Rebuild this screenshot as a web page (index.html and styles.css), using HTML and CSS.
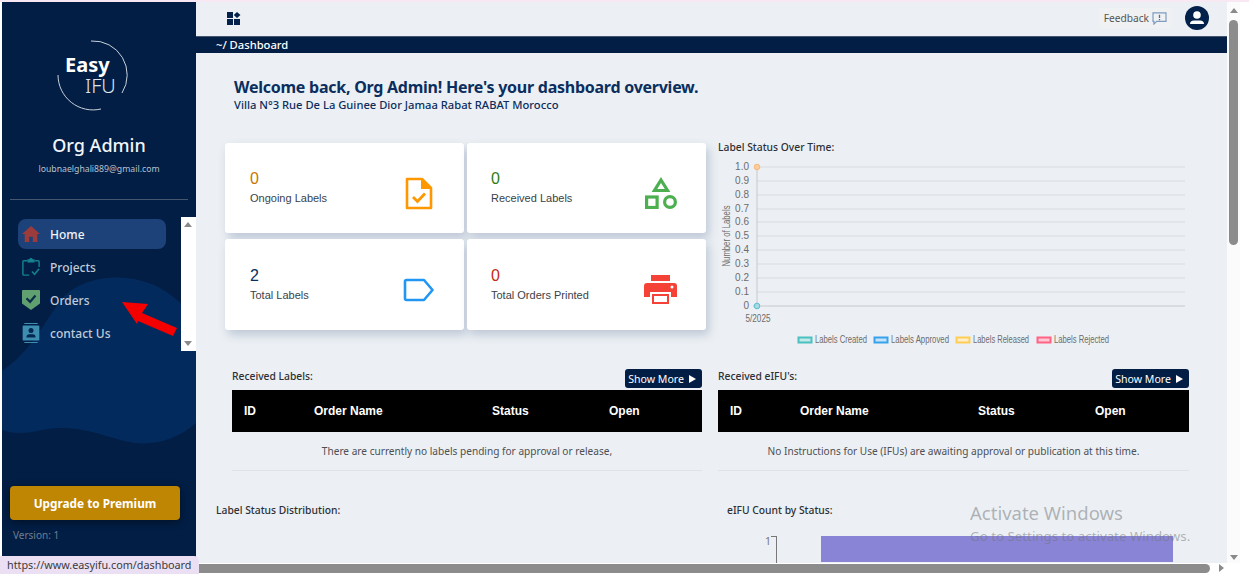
FILE: index.html
```html
<!DOCTYPE html>
<html lang="en">
<head>
    <meta charset="UTF-8">
    <title>EasyIFU Dashboard</title>
    <link rel="stylesheet" href="styles.css">
</head>
<body>
    <div class="top-line"></div>
    <div class="app">
        <aside class="sidebar">
            <svg class="wave" viewBox="0 0 194 200" aria-hidden="true">
                <path d="M0 97 C28 78 40 52 58 27 C76 4 116 -3 150 10 C168 18 184 32 194 48 L194 149 C172 168 146 174 118 166 C92 158 68 150 40 156 C24 160 10 160 0 156 Z"/>
            </svg>
            <div class="logo">
                <svg class="logo-ring" viewBox="0 0 72 72" aria-hidden="true">
                    <path d="M34 1 A34 34 0 0 1 65 53"/>
                    <path d="M1 35 A35 35 0 0 0 44 69"/>
                </svg>
                <span class="logo-easy">Easy</span>
                <span class="logo-ifu">IFU</span>
            </div>
            <div class="user-name">Org Admin</div>
            <div class="user-email">loubnaelghali889@gmail.com</div>
            <div class="side-rule"></div>
            <div class="nav-wrap">
                <nav class="nav">
                    <a class="nav-item active">
                        <svg class="nav-icon" viewBox="0 0 20 18"><path fill="#9c3b3b" d="M10 0 L20 9 L17 9 L17 18 L12 18 L12 12 L8 12 L8 18 L3 18 L3 9 L0 9 Z"/></svg>
                        Home
                    </a>
                    <a class="nav-item">
                        <svg class="nav-icon" viewBox="0 0 20 20"><path fill="none" stroke="#15808f" stroke-width="1.6" d="M6 3 H2 Q1 3 1 4 V18 Q1 19 2 19 H8 M14 3 H18 Q19 3 19 4 V10"/><path fill="#15808f" d="M6 1.5 H8 L9 0 H11 L12 1.5 H14 V5 H6 Z"/><path fill="none" stroke="#15808f" stroke-width="1.8" d="M11 15 L14 18 L19 12"/></svg>
                        Projects
                    </a>
                    <a class="nav-item">
                        <svg class="nav-icon" viewBox="0 0 20 22"><path fill="#5f9f70" d="M1 0 H19 Q20 0 20 1 V15 L10 22 L0 15 V1 Q0 0 1 0 Z"/><path fill="none" stroke="#0d2c4c" stroke-width="2.4" d="M5 9 L9 13 L15 6"/></svg>
                        Orders
                    </a>
                    <a class="nav-item">
                        <svg class="nav-icon" viewBox="0 0 20 24"><path fill="#3e8eb2" d="M2 0 H18 V1.2 H2 Z M2 22.8 H18 V24 H2 Z M1 3 H19 Q20 3 20 4 V20 Q20 21 19 21 H1 Q0 21 0 20 V4 Q0 3 1 3 Z"/><circle cx="10" cy="9" r="3" fill="#04284f"/><path fill="#04284f" d="M4.5 17.5 Q4.5 13.5 8 13.5 H12 Q15.5 13.5 15.5 17.5 Z"/></svg>
                        contact Us
                    </a>
                </nav>
                <div class="nav-scroll">
                    <span class="arrow-up"></span>
                    <span class="arrow-down"></span>
                </div>
            </div>
            <button class="upgrade">Upgrade to Premium</button>
            <div class="version">Version: 1</div>
            <svg class="red-arrow" viewBox="0 0 60 40" aria-hidden="true"><path fill="#f40000" d="M0 0 L26 2 L20 11 L55 26 L51 34 L16 19 L15 22 Z"/></svg>
        </aside>

        <main class="main">
            <header class="topbar">
                <svg class="apps-icon" viewBox="0 0 14 13"><path fill="#03214a" d="M0 0 H6 V6 H0 Z M0 7 H6 V13 H0 Z M7 7 H13 V13 H7 Z M10 0 L13.5 3 L10 6 L6.8 3 Z"/></svg>
                <div class="feedback">
                    Feedback
                    <svg class="feedback-icon" viewBox="0 0 16 14"><path fill="none" stroke="#7d9cc0" stroke-width="1.3" d="M1 1 H15 V10 H5 L2 13 V10 H1 Z"/><path stroke="#51718f" stroke-width="1.4" d="M8 3 V6.5 M8 7.6 V9"/></svg>
                </div>
                <svg class="avatar" viewBox="0 0 24 24"><circle cx="12" cy="12" r="12" fill="#03214a"/><circle cx="12" cy="9" r="3.8" fill="#fff"/><path fill="#fff" d="M5 18 Q5 14.5 9 14.5 H15 Q19 14.5 19 18 Z"/></svg>
            </header>
            <div class="crumb">~/ Dashboard</div>

            <div class="welcome">
                <h1>Welcome back, Org Admin! Here's your dashboard overview.</h1>
                <p>Villa N°3 Rue De La Guinee Dior Jamaa Rabat RABAT Morocco</p>
            </div>

            <section class="overview">
                <div class="cards">
                    <div class="card">
                        <div class="card-text"><div class="count orange">0</div><div class="card-label">Ongoing Labels</div></div>
                        <svg class="card-icon doc" viewBox="0 0 28 33"><path fill="none" stroke="#ff9800" stroke-width="2.6" stroke-linejoin="round" d="M2 2 H17 L26 11 V31 H2 Z"/><path fill="#ff9800" d="M16 1 L27 12 H16 Z"/><path fill="none" stroke="#ff9800" stroke-width="2.8" d="M8 20 L12.5 24.5 L20 16.5"/></svg>
                    </div>
                    <div class="card">
                        <div class="card-text"><div class="count green">0</div><div class="card-label">Received Labels</div></div>
                        <svg class="card-icon shapes" viewBox="0 0 32 32"><path fill="none" stroke="#4caf50" stroke-width="3.2" d="M16 3 L22.5 13.5 H9.5 Z"/><rect x="1.6" y="20" width="10.5" height="10.5" fill="none" stroke="#4caf50" stroke-width="3.2"/><circle cx="25" cy="25" r="5.4" fill="none" stroke="#4caf50" stroke-width="3.2"/></svg>
                    </div>
                    <div class="card">
                        <div class="card-text"><div class="count navy">2</div><div class="card-label">Total Labels</div></div>
                        <svg class="card-icon tag" viewBox="0 0 32 24"><path fill="none" stroke="#2196f3" stroke-width="2.6" stroke-linejoin="round" d="M3.5 2 H21 L29.5 12 L21 22 H3.5 Q2 22 2 20.5 V3.5 Q2 2 3.5 2 Z"/></svg>
                    </div>
                    <div class="card">
                        <div class="card-text"><div class="count red">0</div><div class="card-label">Total Orders Printed</div></div>
                        <svg class="card-icon printer" viewBox="0 0 33 30"><path fill="#f44336" d="M7 0 H26 V6 H7 Z M3 8 H30 Q33 8 33 11 V22 H27 V17 H6 V22 H0 V11 Q0 8 3 8 Z M8 19 H25 V29 H8 Z"/><path fill="#fff" d="M10 21 H23 V27 H10 Z"/><circle cx="28" cy="12" r="1.5" fill="#fff"/></svg>
                    </div>
                </div>
                <div class="line-chart">
                    <h3 class="chart-title">Label Status Over Time:</h3>
                    <svg class="chart-svg" viewBox="0 0 480 196">
                        <path class="grid" d="M39 11 H467 M39 25 H467 M39 39 H467 M39 53 H467 M39 66 H467 M39 80 H467 M39 94 H467 M39 108 H467 M39 122 H467 M39 136 H467"/>
                        <path class="axis" d="M39 11 V150 M35 150 H467"/>
                        <text class="tick" x="31" y="14">1.0</text>
                        <text class="tick" x="31" y="28">0.9</text>
                        <text class="tick" x="31" y="42">0.8</text>
                        <text class="tick" x="31" y="56">0.7</text>
                        <text class="tick" x="31" y="69">0.6</text>
                        <text class="tick" x="31" y="83">0.5</text>
                        <text class="tick" x="31" y="97">0.4</text>
                        <text class="tick" x="31" y="111">0.3</text>
                        <text class="tick" x="31" y="125">0.2</text>
                        <text class="tick" x="31" y="139">0.1</text>
                        <text class="tick" x="31" y="153">0</text>
                        <text class="tick-x" x="40" y="166" textLength="25" lengthAdjust="spacingAndGlyphs">5/2025</text>
                        <text class="axis-name" transform="translate(12 80) rotate(-90)" textLength="61" lengthAdjust="spacingAndGlyphs">Number of Labels</text>
                        <circle cx="39" cy="11" r="2.8" fill="#ffcd9a" stroke="#f7b77c"/>
                        <circle cx="39" cy="150" r="2.8" fill="#a5dce0" stroke="#5cbcd0"/>
                        <rect x="80.5" y="181.5" width="13" height="5" fill="#c3e8e8" stroke="#4bc0c0" stroke-width="2"/>
                        <text class="legend" x="97" y="187" textLength="52" lengthAdjust="spacingAndGlyphs">Labels Created</text>
                        <rect x="156.5" y="181.5" width="13" height="5" fill="#c5e3f8" stroke="#36a2eb" stroke-width="2"/>
                        <text class="legend" x="173" y="187" textLength="58" lengthAdjust="spacingAndGlyphs">Labels Approved</text>
                        <rect x="238.5" y="181.5" width="13" height="5" fill="#ffeec8" stroke="#ffcd56" stroke-width="2"/>
                        <text class="legend" x="255" y="187" textLength="56" lengthAdjust="spacingAndGlyphs">Labels Released</text>
                        <rect x="319.5" y="181.5" width="13" height="5" fill="#ffc8d4" stroke="#ff6384" stroke-width="2"/>
                        <text class="legend" x="336" y="187" textLength="55" lengthAdjust="spacingAndGlyphs">Labels Rejected</text>
                    </svg>
                </div>
            </section>

            <section class="tables">
                <div class="table-block">
                    <div class="table-head">
                        <span class="table-title">Received Labels:</span>
                        <button class="show-more">Show More <span class="play"></span></button>
                    </div>
                    <div class="table-row-head">
                        <span class="col-id">ID</span><span class="col-name">Order Name</span><span class="col-status">Status</span><span>Open</span>
                    </div>
                    <div class="empty">There are currently no labels pending for approval or release,</div>
                </div>
                <div class="table-block">
                    <div class="table-head">
                        <span class="table-title">Received eIFU's:</span>
                        <button class="show-more">Show More <span class="play"></span></button>
                    </div>
                    <div class="table-row-head">
                        <span class="col-id">ID</span><span class="col-name">Order Name</span><span class="col-status">Status</span><span>Open</span>
                    </div>
                    <div class="empty">No Instructions for Use (IFUs) are awaiting approval or publication at this time.</div>
                </div>
            </section>

            <section class="bottom">
                <h3 class="dist-title">Label Status Distribution:</h3>
                <div class="count-chart">
                    <h3 class="chart-title">eIFU Count by Status:</h3>
                    <div class="bars">
                        <span class="bar-tick">1</span>
                        <span class="bar-axis"></span>
                        <span class="bar"></span>
                    </div>
                </div>
            </section>

            <div class="activate">
                <div class="activate-big">Activate Windows</div>
                <div class="activate-small">Go to Settings to activate Windows.</div>
            </div>
        </main>

        <div class="v-scroll">
            <span class="arrow-up"></span>
            <span class="v-thumb"></span>
            <span class="arrow-down"></span>
        </div>
    </div>
    <div class="h-scroll">
        <span class="h-thumb"></span>
        <span class="arrow-right"></span>
    </div>
    <div class="status-url">https://www.easyifu.com/dashboard</div>
</body>
</html>
```

FILE: styles.css
```css
* {
    box-sizing: border-box;
}

html, body {
    margin: 0;
    height: 100%;
    overflow: hidden;
    background: #fff;
}

body {
    position: relative;
    font-family: "Noto Sans", "Liberation Sans", sans-serif;
    color: #333;
}

h1, h3, p {
    margin: 0;
}

.top-line {
    height: 2px;
    background: #f8e8f3;
}

.app {
    display: flex;
    width: 1240px;
    height: 561px;
    padding-left: 2px;
}

/* sidebar */
.sidebar {
    position: relative;
    flex: 0 0 194px;
    display: flex;
    flex-direction: column;
    background: #021e45;
    overflow: hidden;
}

.wave {
    position: absolute;
    top: 272px;
    left: 0;
    width: 194px;
    height: 200px;
    fill: #032a5c;
}

.logo {
    position: relative;
    width: 72px;
    height: 72px;
    margin: 38px 0 0 55px;
    color: #fff;
}

.logo-ring {
    position: absolute;
    top: 0;
    left: 0;
    width: 72px;
    height: 72px;
    fill: none;
    stroke: #c9d2dc;
    stroke-width: 1;
}

.logo-easy {
    position: absolute;
    top: 15px;
    left: 8px;
    font-size: 20px;
    line-height: 20px;
    font-weight: 700;
}

.logo-ifu {
    position: absolute;
    top: 36px;
    left: 28px;
    font-size: 20px;
    line-height: 20px;
    font-weight: 300;
    color: #dfe5ec;
}

.user-name {
    margin-top: 20px;
    text-align: center;
    font-size: 18px;
    line-height: 26px;
    font-weight: 500;
    color: #f2f5f8;
}

.user-email {
    margin-top: 4px;
    text-align: center;
    font-size: 8.7px;
    line-height: 14px;
    color: #b7c2d0;
}

.side-rule {
    height: 1px;
    margin: 23px 8px 0;
    background: #46566c;
}

.nav-wrap {
    position: relative;
    display: flex;
    justify-content: space-between;
    height: 134px;
    margin-top: 17px;
}

.nav {
    padding: 2px 0 0 16px;
}

.nav-item {
    display: flex;
    align-items: center;
    gap: 10px;
    width: 148px;
    height: 30px;
    margin-bottom: 3px;
    padding-left: 4px;
    border-radius: 8px;
    font-size: 12px;
    font-weight: 500;
    color: #c1cbd8;
}

.nav-item.active {
    background: #1c4279;
    color: #f1f4f7;
}

.nav-icon {
    flex: 0 0 18px;
    width: 18px;
    height: 20px;
}

.nav-scroll {
    position: relative;
    width: 15px;
    background: #fff;
}

.arrow-up, .arrow-down, .arrow-right {
    display: block;
    width: 0;
    height: 0;
    border-style: solid;
}

.arrow-up {
    border-width: 0 4.5px 5px;
    border-color: transparent transparent #8a8a8a;
}

.arrow-down {
    border-width: 5px 4.5px 0;
    border-color: #8a8a8a transparent transparent;
}

.nav-scroll .arrow-up {
    position: absolute;
    top: 5px;
    left: 3px;
}

.nav-scroll .arrow-down {
    position: absolute;
    bottom: 5px;
    left: 3px;
}

.upgrade {
    position: relative;
    width: 170px;
    height: 34px;
    margin: 135px 0 0 8px;
    border: none;
    border-radius: 4px;
    background: #bf8604;
    box-shadow: 0 2px 8px rgba(0, 0, 0, 0.45);
    font-family: inherit;
    font-size: 11.8px;
    font-weight: 700;
    color: #fff;
}

.version {
    position: relative;
    margin: 8px 0 0 11px;
    font-size: 10px;
    line-height: 14px;
    color: #6e7e92;
}

.red-arrow {
    position: absolute;
    top: 300px;
    left: 120px;
    width: 60px;
    height: 40px;
}

/* main */
.main {
    position: relative;
    flex: 1;
    min-width: 0;
    background: #ecf0f4;
    overflow: hidden;
}

.topbar {
    display: flex;
    align-items: center;
    height: 35px;
    padding: 0 18px 2px 31px;
    border-bottom: 1px solid #44566e;
}

.apps-icon {
    width: 14px;
    height: 13px;
}

.feedback {
    display: flex;
    align-items: center;
    gap: 3px;
    margin-left: auto;
    padding: 3px 4px;
    background: #eff1f3;
    font-size: 10.2px;
    color: #555;
}

.feedback-icon {
    width: 15px;
    height: 13px;
}

.avatar {
    width: 24px;
    height: 24px;
    margin-left: 14px;
}

.crumb {
    height: 16px;
    padding-left: 20px;
    background: #021e45;
    font-size: 11.2px;
    line-height: 16px;
    font-weight: 500;
    color: #fff;
}

.welcome {
    padding: 23px 0 0 38px;
    color: #0b2e5e;
}

.welcome h1 {
    font-size: 16px;
    line-height: 22px;
    font-weight: 700;
    letter-spacing: -0.25px;
}

.welcome p {
    font-size: 11.2px;
    line-height: 14px;
    font-weight: 500;
}

.overview {
    display: flex;
    margin: 31px 0 0 29px;
}

.cards {
    flex: 0 0 493px;
    display: grid;
    grid-template-columns: 239px 239px;
    grid-template-rows: 90px 91px;
    gap: 6px 3px;
    align-content: start;
}

.card {
    display: flex;
    align-items: center;
    justify-content: space-between;
    padding: 0 29px 0 25px;
    border-radius: 3px;
    background: #fff;
    box-shadow: 3px 5px 10px rgba(120, 140, 170, 0.4);
    font-family: "Liberation Sans", Arial, sans-serif;
}

.card:nth-child(even) {
    padding-left: 24px;
}

.card:nth-child(-n+2) .card-text {
    margin-top: -2px;
}

.count {
    font-size: 16px;
    line-height: 20px;
}

.orange { color: #c77700; }
.green { color: #2e7d12; }
.navy { color: #0b2e5e; }
.red { color: #c62810; }

.card-label {
    margin-top: 2px;
    font-size: 11px;
    line-height: 15px;
    color: #3a3f47;
}

.card-icon {
    margin-top: 10px;
}

.card-icon.doc {
    width: 28px;
    height: 33px;
    margin-right: 2px;
}

.card-icon.shapes {
    width: 32px;
    height: 32px;
}

.card-icon.tag {
    width: 32px;
    height: 24px;
}

.card-icon.printer {
    width: 33px;
    height: 30px;
}

.line-chart {
    flex: 1;
    margin-top: -3px;
}

.chart-title, .dist-title, .table-title {
    font-size: 10.3px;
    line-height: 14px;
    font-weight: 500;
    color: #2c2f33;
}

.chart-svg {
    display: block;
    width: 480px;
    height: 196px;
    margin-top: 2px;
    font-family: "Liberation Sans", Arial, sans-serif;
}

.grid {
    fill: none;
    stroke: #d8dcdf;
}

.axis {
    fill: none;
    stroke: #c6cacd;
}

.tick, .tick-x {
    font-size: 10px;
    fill: #6c6c6c;
}

.tick {
    text-anchor: end;
}

.tick-x {
    text-anchor: middle;
}

.axis-name, .legend {
    font-size: 10px;
    fill: #6c6c6c;
}

.axis-name {
    text-anchor: middle;
}

.tables {
    display: flex;
    gap: 16px;
    width: 993px;
    margin: 17px 0 0 36px;
}

.table-block {
    flex: 0 0 470px;
}

.table-block + .table-block {
    flex-basis: 471px;
}

.table-head {
    display: flex;
    align-items: flex-start;
    justify-content: space-between;
    height: 21px;
}

.show-more {
    display: flex;
    align-items: center;
    gap: 5px;
    height: 19px;
    padding: 0 6px 0 3px;
    border: none;
    border-radius: 3px;
    background: #021e45;
    font-family: inherit;
    font-size: 10.6px;
    color: #fff;
}

.play {
    width: 0;
    height: 0;
    border-style: solid;
    border-width: 4.5px 0 4.5px 7px;
    border-color: transparent transparent transparent #fff;
}

.table-row-head {
    display: flex;
    align-items: center;
    height: 42px;
    padding-left: 12px;
    background: #000;
    font-family: "Liberation Sans", Arial, sans-serif;
    font-size: 12px;
    font-weight: 700;
    color: #fff;
}

.col-id {
    width: 70px;
}

.col-name {
    width: 178px;
}

.col-status {
    width: 117px;
}

.empty {
    height: 39px;
    border-bottom: 1px solid #dfe3e6;
    text-align: center;
    font-size: 10.1px;
    line-height: 38px;
    color: #4c4f53;
}

.bottom {
    display: flex;
    margin: 32px 0 0 20px;
}

.dist-title {
    flex: 0 0 511px;
}

.count-chart {
    flex: 1;
}

.bars {
    display: flex;
    align-items: flex-start;
    height: 27px;
    margin-top: 19px;
}

.bar-tick {
    width: 41px;
    padding-left: 38px;
    font-size: 10.5px;
    line-height: 10px;
    color: #777;
    white-space: nowrap;
}

.bar-axis {
    flex: 0 0 6px;
    height: 27px;
    margin-left: 3px;
    border-top: 1px solid #777;
    border-left: 1px solid #777;
    transform: scaleX(-1);
}

.bar {
    flex: 0 0 352px;
    height: 26px;
    margin-left: 44px;
    background: #8a84d6;
}

.activate {
    position: absolute;
    left: 774px;
    top: 499px;
    color: rgba(110, 115, 120, 0.5);
}

.activate-big {
    font-size: 18.5px;
    line-height: 24px;
}

.activate-small {
    margin-top: 1px;
    font-size: 13.3px;
    line-height: 20px;
    white-space: nowrap;
}

/* page scrollbars */
.v-scroll {
    flex: 0 0 13px;
    display: flex;
    flex-direction: column;
    align-items: center;
    background: #fbfbfb;
    padding-top: 6px;
}

.v-thumb {
    width: 9px;
    height: 225px;
    margin-top: 7px;
    border-radius: 5px;
    background: #8c8c8c;
}

.v-scroll .arrow-down {
    margin-top: auto;
    margin-bottom: 3px;
}

.h-scroll {
    display: flex;
    align-items: center;
    width: 1240px;
    height: 10px;
    padding-left: 190px;
}

.h-thumb {
    width: 1020px;
    height: 9px;
    border-radius: 0 5px 5px 0;
    background: #8c8c8c;
}

.arrow-right {
    margin-left: 9px;
    border-width: 4.5px 0 4.5px 5px;
    border-color: transparent transparent transparent #8a8a8a;
}

.status-url {
    position: absolute;
    top: 556px;
    left: 0;
    width: 199px;
    height: 18px;
    padding-left: 7px;
    border-radius: 0 5px 0 0;
    background: #ebe0f3;
    font-size: 10.8px;
    line-height: 18px;
    color: #3a3a40;
    white-space: nowrap;
}
```
